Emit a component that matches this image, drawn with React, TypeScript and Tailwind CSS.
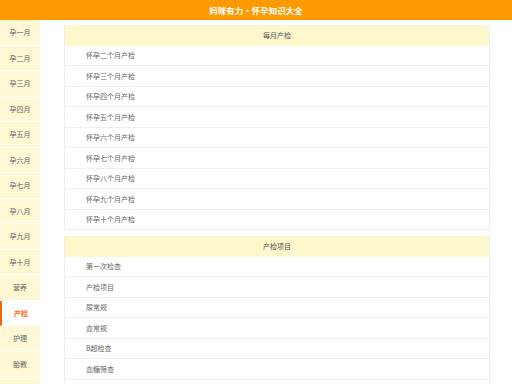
import React from "react";

const months = ["孕一月", "孕二月", "孕三月", "孕四月", "孕五月", "孕六月", "孕七月", "孕八月", "孕九月", "孕十月", "营养", "产检", "护理", "胎教", ""];
const sec1 = ["怀孕二个月产检", "怀孕三个月产检", "怀孕四个月产检", "怀孕五个月产检", "怀孕六个月产检", "怀孕七个月产检", "怀孕八个月产检", "怀孕九个月产检", "怀孕十个月产检"];
const sec2 = ["第一次检查", "产检项目", "尿常规", "血常规", "B超检查", "血糖筛查", ""];

function Section({ title, items }: { title: string; items: string[] }) {
  return (
    <div className="border-x border-[#eeeeee]">
      <div className="h-[20.5px] flex items-center justify-center bg-[#fdf7cc] text-[7px] text-[#555]">{title}</div>
      {items.map((t, i) => (
        <div key={i} className="h-[20.5px] flex items-center pl-[21px] border-b border-[#eeeeee] text-[7px] text-[#666] bg-white">
          {t}
        </div>
      ))}
    </div>
  );
}

export default function App() {
  return (
    <div className="w-[512px] h-[384px] overflow-hidden bg-white" style={{ fontFamily: '"Noto Sans CJK SC", "Noto Sans", sans-serif' }}>
      <div className="h-[20px] bg-[#ff9900] flex items-center justify-center text-white font-bold text-[8.5px] leading-none">
        妈咪有力•怀孕知识大全
      </div>
      <div className="flex">
        <div className="w-[40px] shrink-0 bg-[#fdf8d3]">
          {months.map((m, i) => {
            const active = m === "产检";
            return (
              <div
                key={i}
                className={
                  active
                    ? "h-[25.5px] flex items-center justify-center border-b border-white bg-white border-l-2 border-l-[#ff6600] text-[#ff6600] font-bold text-[7px]"
                    : "h-[25.5px] flex items-center justify-center border-b border-white text-[#666] text-[7px]"
                }
              >
                {m}
              </div>
            );
          })}
        </div>
        <div className="w-[426px] ml-[24px] pt-[5px] flex flex-col gap-[6px]">
          <Section title="每月产检" items={sec1} />
          <Section title="产检项目" items={sec2} />
        </div>
      </div>
    </div>
  );
}
